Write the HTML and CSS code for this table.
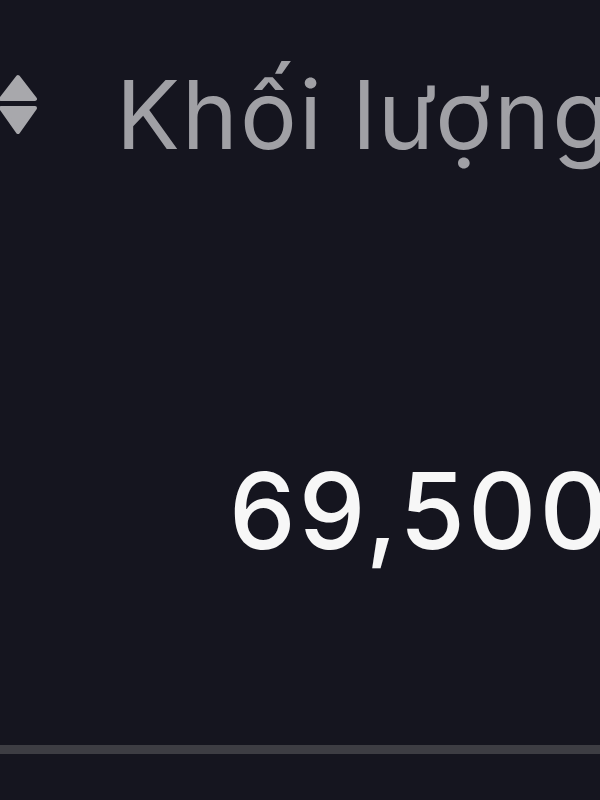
FILE: index.html
```html
<!DOCTYPE html>
<html lang="vi">
<head>
<meta charset="utf-8">
<link rel="stylesheet" href="styles.css">
</head>
<body>
<div class="table">
  <div class="head-row">
    <svg class="sort" width="38" height="62" viewBox="0 0 38 62">
      <polygon points="18,3 35,25 1,25" fill="#a8a8ac" stroke="#a8a8ac" stroke-width="4" stroke-linejoin="round"/>
      <polygon points="1,34 35,34 18,58" fill="#a8a8ac" stroke="#a8a8ac" stroke-width="4" stroke-linejoin="round"/>
    </svg>
    <span class="head-text">Khối lượng</span>
  </div>
  <div class="body-row">
    <span class="num">69,500</span>
  </div>
</div>
</body>
</html>
```
FILE: styles.css
```css
html, body {
  margin: 0;
  padding: 0;
  background: #15151f;
  overflow: hidden;
}
.table {
  width: 600px;
  height: 800px;
  overflow: hidden;
  font-family: Inter, "Noto Sans", sans-serif;
}
.head-row {
  display: flex;
  align-items: flex-start;
  height: 170px;
  padding-top: 67px;
  box-sizing: border-box;
  white-space: nowrap;
}
.sort {
  flex: none;
  margin-top: 7px;
  margin-left: 0;
}
.head-text {
  margin-left: 78px;
  font-size: 95px;
  line-height: 95px;
  letter-spacing: 2px;
  color: #a0a0a5;
  font-weight: 400;
}
.body-row {
  height: 584px;
  box-sizing: border-box;
  padding-top: 288px;
  padding-left: 229px;
  border-bottom: 9px solid #3d3d43;
  white-space: nowrap;
}
.num {
  display: block;
  font-size: 106px;
  line-height: 106px;
  letter-spacing: 3px;
  color: #f7f7f7;
  font-weight: 500;
}
```
